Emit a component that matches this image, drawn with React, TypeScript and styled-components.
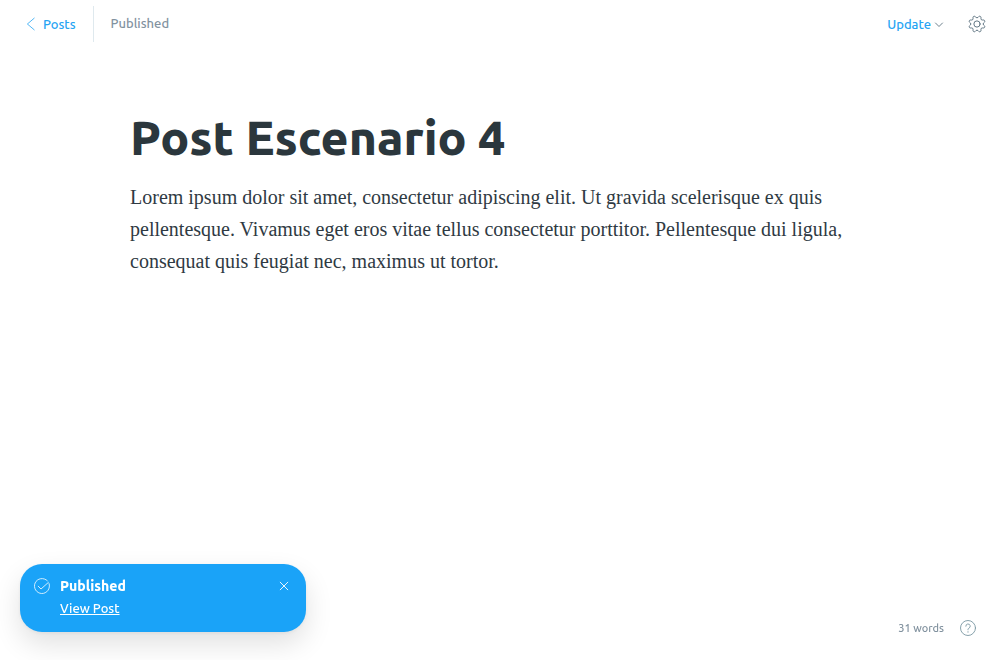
import React from "react";
import styled, { createGlobalStyle } from "styled-components";

const GlobalStyle = createGlobalStyle`
  *, *::before, *::after { box-sizing: border-box; }
  body {
    margin: 0;
    background: #fff;
    color: #15171a;
    font-family: Ubuntu, "Noto Sans", "Open Sans", sans-serif;
    font-size: 13px;
    font-weight: 500;
  }
  button { font: inherit; border: 0; padding: 0; background: none; cursor: pointer; }
`;

const Page = styled.div`
  display: flex;
  flex-direction: column;
  min-height: 100vh;
`;

const Header = styled.header`
  display: flex;
  align-items: center;
  justify-content: space-between;
  height: 48px;
  padding: 0 14px 0 26px;
`;

const Group = styled.div<{ $gap: number }>`
  display: flex;
  align-items: center;
  gap: ${(p) => p.$gap}px;
`;

const BackLink = styled.a`
  display: flex;
  align-items: center;
  gap: 7px;
  height: 36px;
  padding-right: 17px;
  border-right: 1px solid #dfe9ee;
  color: #26a4f3;
  line-height: 18px;
  text-decoration: none;
`;

const Status = styled.span`
  color: #82929f;
  line-height: 20px;
  padding-bottom: 2px;
`;

const UpdateButton = styled.button`
  display: flex;
  align-items: center;
  gap: 3px;
  color: #26a4f3;
  line-height: 18px;
`;

const IconButton = styled.button<{ $color: string }>`
  display: flex;
  color: ${(p) => p.$color};
`;

const Icon = styled.svg.attrs({ "aria-hidden": true, fill: "none", stroke: "currentColor" })`
  display: block;
  flex: none;
  stroke-linecap: round;
  stroke-linejoin: round;
`;

const Editor = styled.main`
  flex: 1;
  width: 100%;
  max-width: 740px;
  margin: 0 auto;
  padding-top: 61px;
`;

const Title = styled.h1`
  margin: 0 0 16px;
  color: #2b373d;
  font-size: 48px;
  font-weight: 800;
  line-height: 56px;
`;

const Paragraph = styled.p`
  margin: 0;
  color: #2f3a43;
  font-family: "Liberation Serif", Georgia, serif;
  font-size: 20px;
  font-weight: 400;
  line-height: 32px;
`;

const Footer = styled.footer`
  position: fixed;
  right: 24px;
  bottom: 24px;
  display: flex;
  align-items: center;
  gap: 16px;
  color: #82929f;
  font-size: 11px;
  line-height: 16px;
`;

const Toast = styled.aside`
  position: fixed;
  left: 20px;
  bottom: 28px;
  display: flex;
  align-items: flex-start;
  gap: 10px;
  width: 286px;
  padding: 12px 16px 14px 14px;
  border-radius: 22px;
  background: #1aa3f8;
  color: #fff;
  box-shadow: 0 1px 4px rgba(0, 0, 0, 0.06), 0 12px 28px rgba(0, 0, 0, 0.12);
`;

const ToastIcon = styled.span`
  padding-top: 2px;
`;

const ToastBody = styled.div`
  flex: 1;
  display: flex;
  flex-direction: column;
  align-items: flex-start;
  gap: 2px;
`;

const ToastTitle = styled.strong`
  font-size: 14px;
  font-weight: 800;
  line-height: 20px;
`;

const ToastLink = styled.a`
  color: #fff;
  line-height: 20px;
  text-decoration: underline;
`;

const CloseButton = styled.button`
  display: flex;
  align-items: center;
  height: 20px;
  color: #fff;
`;

const GEAR =
  "M10.546 2.438a1.957 1.957 0 0 0 2.908 0L14.4 1.4a1.959 1.959 0 0 1 3.41 1.413l-.071 1.4a1.958 1.958 0 0 0 2.051 2.054l1.4-.071A1.959 1.959 0 0 1 22.6 9.6l-1.04.94a1.962 1.962 0 0 0 0 2.909l1.04.94a1.959 1.959 0 0 1-1.413 3.411l-1.4-.071a1.957 1.957 0 0 0-2.056 2.056l.071 1.4A1.959 1.959 0 0 1 14.4 22.6l-.941-1.041a1.959 1.959 0 0 0-2.908 0L9.606 22.6A1.959 1.959 0 0 1 6.2 21.192l.072-1.4a1.958 1.958 0 0 0-2.056-2.056l-1.4.071A1.958 1.958 0 0 1 1.4 14.4l1.041-.94a1.962 1.962 0 0 0 0-2.909L1.4 9.606A1.958 1.958 0 0 1 2.813 6.2l1.4.071a1.958 1.958 0 0 0 2.053-2.06L6.2 2.81A1.959 1.959 0 0 1 9.606 1.4z";

export default function App() {
  return (
    <Page>
      <GlobalStyle />
      <Header>
        <Group $gap={17}>
          <BackLink href="#posts">
            <Icon width="10" height="14" viewBox="0 0 10 14" strokeWidth="0.8">
              <path d="M8.2 1.2 1.4 7l6.8 5.8" />
            </Icon>
            Posts
          </BackLink>
          <Status>Published</Status>
        </Group>
        <Group $gap={24}>
          <UpdateButton type="button">
            Update
            <Icon width="10" height="8" viewBox="0 0 10 8" strokeWidth="0.9" color="#5d7380">
              <path d="M1.5 3 5 6.5 8.5 3" />
            </Icon>
          </UpdateButton>
          <IconButton type="button" $color="#5d7380" aria-label="Settings">
            <Icon width="18" height="18" viewBox="-1 -1 26 26" strokeWidth="1.4">
              <path d={GEAR} />
              <circle cx="12" cy="12" r="4.5" />
            </Icon>
          </IconButton>
        </Group>
      </Header>

      <Editor>
        <Title>Post Escenario 4</Title>
        <Paragraph>
          Lorem ipsum dolor sit amet, consectetur adipiscing elit. Ut gravida scelerisque ex quis
          pellentesque. Vivamus eget eros vitae tellus consectetur porttitor. Pellentesque dui
          ligula, consequat quis feugiat nec, maximus ut tortor.
        </Paragraph>
      </Editor>

      <Footer>
        <span>31 words</span>
        <IconButton type="button" $color="#7b97a3" aria-label="Help">
          <Icon width="16" height="16" viewBox="0 0 16 16" strokeWidth="0.9">
            <circle cx="8" cy="8" r="7.5" />
            <path d="M5.8 6.2a2.2 2.2 0 1 1 3.1 2c-.6.3-.9.7-.9 1.3v.3" />
            <path d="M8 11.8v.1" strokeWidth="1.2" />
          </Icon>
        </IconButton>
      </Footer>

      <Toast role="status">
        <ToastIcon>
          <Icon width="16" height="16" viewBox="0 0 16 16" strokeWidth="0.8">
            <path d="M15.1 5.6A7.5 7.5 0 1 1 13.3 2.7" />
            <path d="M4.2 8.2 7 11l7.4-6.6" />
          </Icon>
        </ToastIcon>
        <ToastBody>
          <ToastTitle>Published</ToastTitle>
          <ToastLink href="#post">View Post</ToastLink>
        </ToastBody>
        <CloseButton type="button" aria-label="Close">
          <Icon width="12" height="12" viewBox="0 0 12 12" strokeWidth="0.9">
            <path d="m2.2 2.2 7.6 7.6M9.8 2.2 2.2 9.8" />
          </Icon>
        </CloseButton>
      </Toast>
    </Page>
  );
}
